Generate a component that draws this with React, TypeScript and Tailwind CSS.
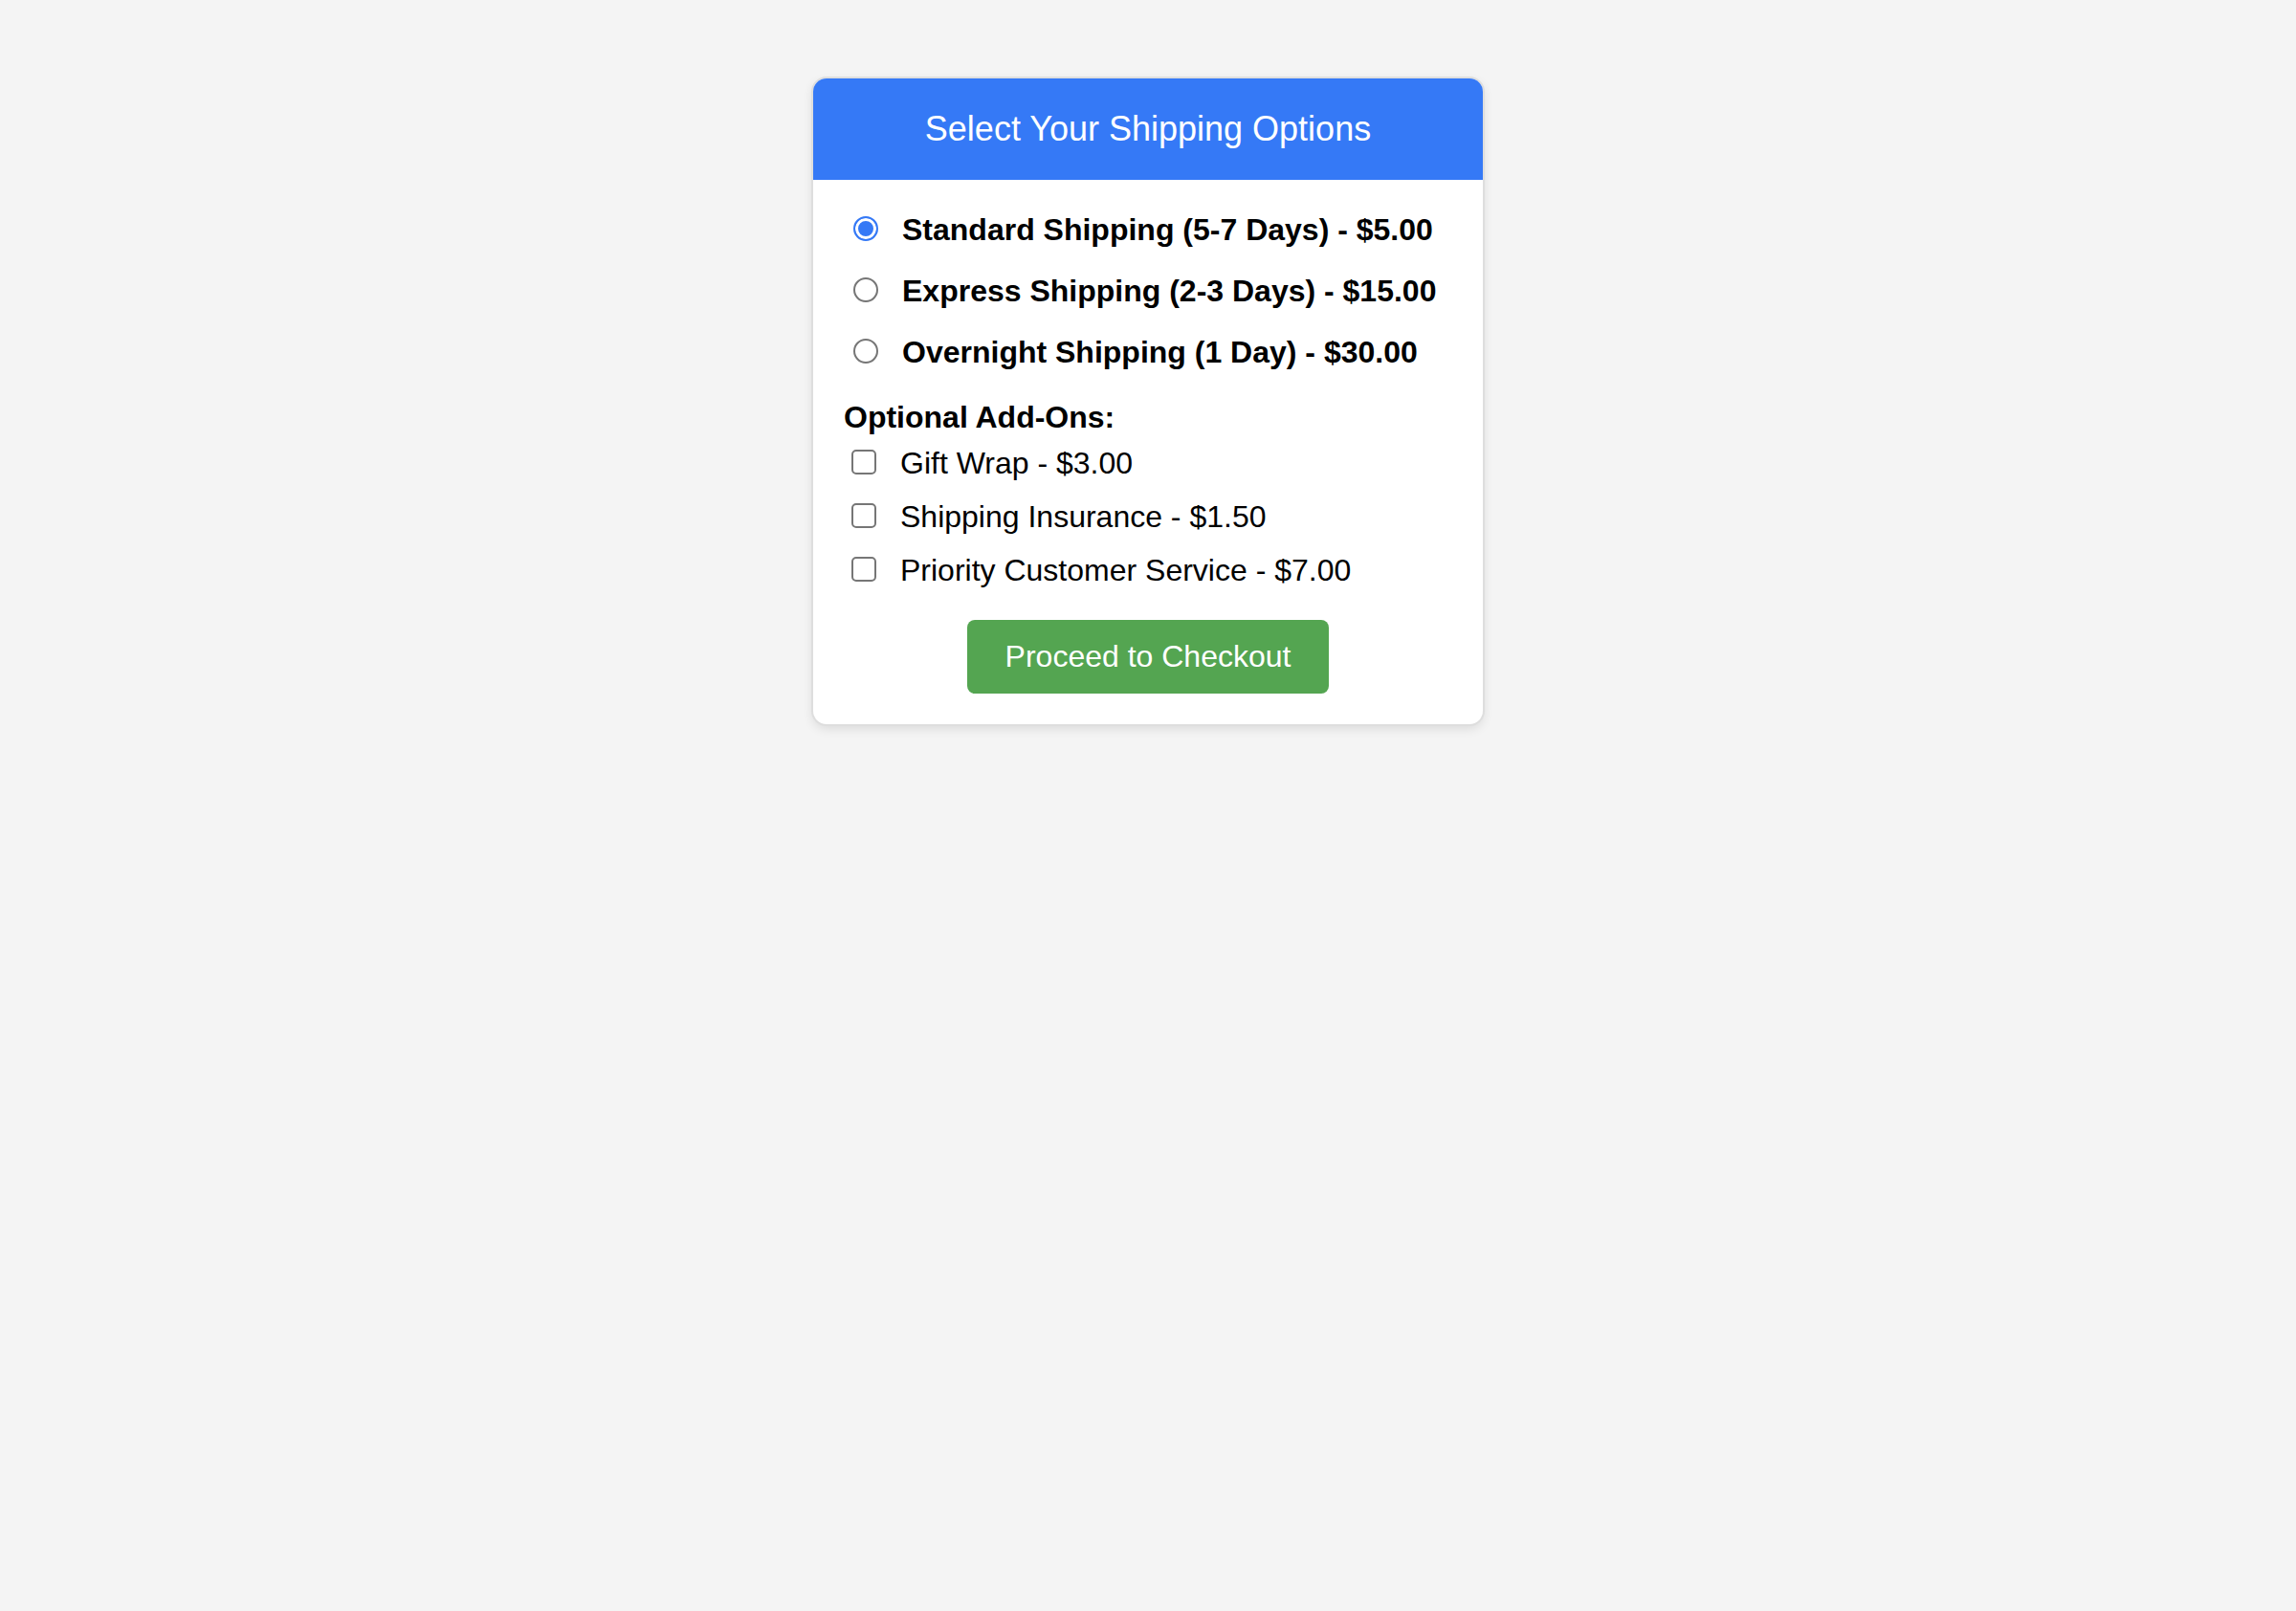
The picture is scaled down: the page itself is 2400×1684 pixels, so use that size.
import { useState } from "react";

const shippingOptions = [
  { id: "standard", label: "Standard Shipping (5-7 Days) - $5.00" },
  { id: "express", label: "Express Shipping (2-3 Days) - $15.00" },
  { id: "overnight", label: "Overnight Shipping (1 Day) - $30.00" },
];

const addOns = [
  { id: "gift-wrap", label: "Gift Wrap - $3.00" },
  { id: "insurance", label: "Shipping Insurance - $1.50" },
  { id: "priority", label: "Priority Customer Service - $7.00" },
];

export default function App() {
  const [shipping, setShipping] = useState("standard");

  return (
    <main className="min-h-screen bg-[#f4f4f4] px-4 py-[82px] font-['Liberation_Sans',Arial,sans-serif] text-[32px] leading-10 text-black">
      <form
        onSubmit={(event) => event.preventDefault()}
        className="mx-auto w-full max-w-[700px] overflow-hidden rounded-[14px] bg-white shadow-[0_0_0_2px_#dedede,0_4px_12px_rgba(0,0,0,0.12)]"
      >
        <h1 className="bg-[#3579f6] px-8 py-8 text-center text-4xl leading-[42px] text-white">
          Select Your Shipping Options
        </h1>
        <div className="p-8">
          <fieldset aria-label="Shipping method" className="flex flex-col gap-6">
            {shippingOptions.map((option) => (
              <label key={option.id} htmlFor={option.id} className="flex items-center font-bold">
                <input
                  id={option.id}
                  type="radio"
                  name="shipping"
                  checked={shipping === option.id}
                  onChange={() => setShipping(option.id)}
                  className="mr-[25px] mb-0.5 ml-[10px] size-[26px] shrink-0 appearance-none rounded-full border-2 border-[#767676] bg-white checked:border-[#3579f6] checked:bg-[#3579f6] checked:shadow-[inset_0_0_0_3px_white]"
                />
                {option.label}
              </label>
            ))}
          </fieldset>
          <fieldset className="mt-7 flex flex-col gap-4">
            <legend className="mb-2 font-bold">Optional Add-Ons:</legend>
            {addOns.map((addOn) => (
              <label key={addOn.id} htmlFor={addOn.id} className="flex items-center">
                <input
                  id={addOn.id}
                  type="checkbox"
                  className="mr-[25px] mb-0.5 ml-2 size-[26px] shrink-0 appearance-none rounded-[5px] border-2 border-[#767676] bg-white checked:bg-[#3579f6]"
                />
                {addOn.label}
              </label>
            ))}
          </fieldset>
          <button
            type="submit"
            className="mx-auto mt-8 block rounded-lg bg-[#54a551] px-10 py-5 text-[32px] leading-[37px] text-white"
          >
            Proceed to Checkout
          </button>
        </div>
      </form>
    </main>
  );
}
